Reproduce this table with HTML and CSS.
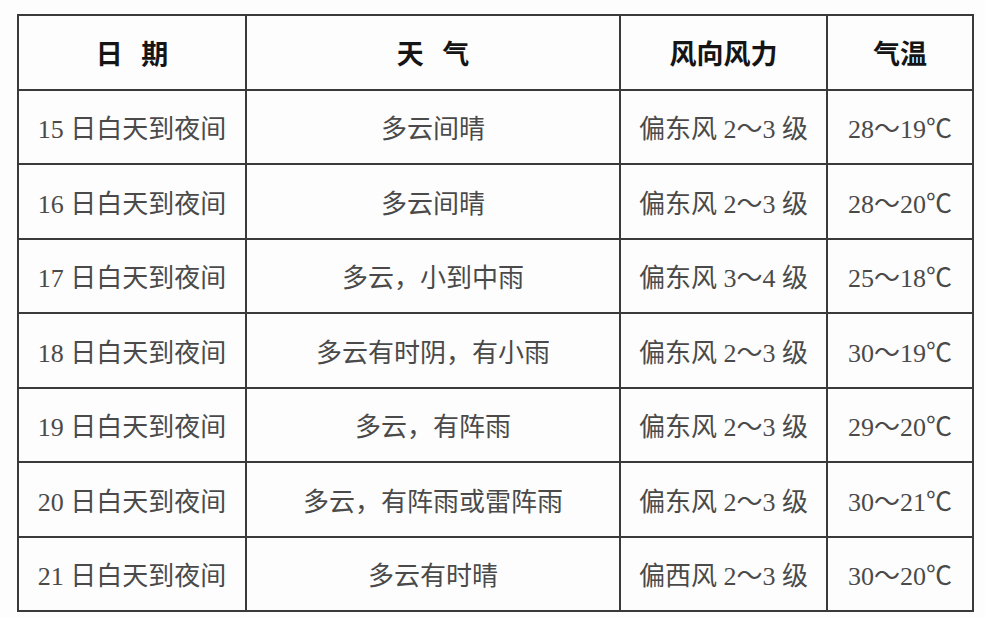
FILE: index.html
```html
<!DOCTYPE html>
<html lang="zh">
<head>
<meta charset="utf-8">
<link rel="stylesheet" href="styles.css">
</head>
<body>
<table class="weather">
  <colgroup>
    <col class="c-date"><col class="c-wx"><col class="c-wind"><col class="c-temp">
  </colgroup>
  <thead>
    <tr><th>日&nbsp;&nbsp;&nbsp;期</th><th>天&nbsp;&nbsp;&nbsp;气</th><th>风向风力</th><th>气温</th></tr>
  </thead>
  <tbody>
    <tr><td>15 日白天到夜间</td><td>多云间晴</td><td>偏东风 2～3 级</td><td>28～19℃</td></tr>
    <tr><td>16 日白天到夜间</td><td>多云间晴</td><td>偏东风 2～3 级</td><td>28～20℃</td></tr>
    <tr><td>17 日白天到夜间</td><td>多云，小到中雨</td><td>偏东风 3～4 级</td><td>25～18℃</td></tr>
    <tr><td>18 日白天到夜间</td><td>多云有时阴，有小雨</td><td>偏东风 2～3 级</td><td>30～19℃</td></tr>
    <tr><td>19 日白天到夜间</td><td>多云，有阵雨</td><td>偏东风 2～3 级</td><td>29～20℃</td></tr>
    <tr><td>20 日白天到夜间</td><td>多云，有阵雨或雷阵雨</td><td>偏东风 2～3 级</td><td>30～21℃</td></tr>
    <tr><td>21 日白天到夜间</td><td>多云有时晴</td><td>偏西风 2～3 级</td><td>30～20℃</td></tr>
  </tbody>
</table>
</body>
</html>
```

FILE: styles.css
```css
html, body {
  margin: 0;
  background: #fdfdfd;
}
body {
  padding: 14px 0 0 17px;
}
.weather {
  border-collapse: collapse;
  table-layout: fixed;
  width: 955px;
}
.c-date { width: 228px; }
.c-wx { width: 374px; }
.c-wind { width: 207px; }
.c-temp { width: 146px; }
.weather th, .weather td {
  border: 2px solid #3a3a3a;
  text-align: center;
  vertical-align: middle;
  padding: 0;
  height: 72.5px;
  white-space: nowrap;
}
.weather th {
  font-family: "Noto Sans CJK SC", sans-serif;
  font-weight: 700;
  font-size: 27px;
  color: #151515;
}
.weather td {
  font-family: "Liberation Serif", "Noto Sans CJK SC", serif;
  font-size: 26px;
  color: #4a4a4a;
}
```
